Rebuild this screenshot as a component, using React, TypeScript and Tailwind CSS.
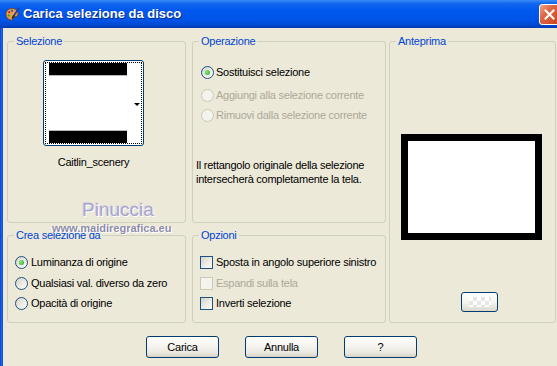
import React from "react";

function Radio({ checked, disabled }: { checked?: boolean; disabled?: boolean }) {
  return (
    <span
      className={
        disabled
          ? "w-[13px] h-[13px] rounded-full border border-[#CAC8BB] bg-[#F4F3EC] flex items-center justify-center shrink-0"
          : "w-[13px] h-[13px] rounded-full border border-[#1C5180] bg-[linear-gradient(135deg,#D6D3C6,#FFFFFF)] flex items-center justify-center shrink-0"
      }
    >
      {checked && (
        <span className="w-[5px] h-[5px] rounded-full bg-[radial-gradient(circle_at_40%_40%,#8CEB86,#1E9E1E)]" />
      )}
    </span>
  );
}

function Check({ disabled }: { disabled?: boolean }) {
  return (
    <span
      className={
        disabled
          ? "w-[13px] h-[13px] border border-[#CAC8BB] bg-[#F4F3EC] shrink-0"
          : "w-[13px] h-[13px] border border-[#1C5180] bg-[linear-gradient(135deg,#D6D3C6,#FFFFFF)] shrink-0"
      }
    />
  );
}

function Group({
  title,
  className,
  children,
}: {
  title: string;
  className: string;
  children?: React.ReactNode;
}) {
  return (
    <fieldset className={"border border-[#D0D0BF] rounded-[3px] min-w-0 p-0 m-0 " + className}>
      <legend className="ml-[6px] px-[2px] leading-[13px] text-[#0046D5]">{title}</legend>
      {children}
    </fieldset>
  );
}

function XPButton({ label }: { label: string }) {
  return (
    <div className="w-[73px] h-[22px] rounded-[3px] border border-[#003C74] bg-[linear-gradient(to_bottom,#FFFFFF_0%,#F5F4EF_45%,#E9E7DE_80%,#D6D0C5_100%)] flex items-center justify-center text-black">
      {label}
    </div>
  );
}

function PaletteIcon() {
  return (
    <svg width="15" height="15" viewBox="0 0 15 15">
      <path
        d="M7 1.5C3.5 1.5 1 4 1 7.2c0 3 2.3 5.6 5.2 5.8 1.2.1 1.6-.8 1.2-1.6-.5-.9.1-1.8 1.2-1.7 1.9.2 4.4-.3 4.4-3C13 3.8 10.5 1.5 7 1.5z"
        fill="#E7A04A"
        stroke="#7A3E10"
        strokeWidth="0.8"
      />
      <circle cx="4.2" cy="5.2" r="1.1" fill="#D62020" />
      <circle cx="7" cy="3.8" r="1.1" fill="#2050E0" />
      <circle cx="3.8" cy="8.6" r="1.1" fill="#20A030" />
      <path d="M13.8 1.2 L8.5 9.2" stroke="#1E3FA0" strokeWidth="1.6" strokeLinecap="round" />
      <path d="M8.6 9 L7.6 10.8" stroke="#3A2A10" strokeWidth="1.6" strokeLinecap="round" />
    </svg>
  );
}

export default function App() {
  return (
    <div className="w-[557px] h-[366px] overflow-hidden flex flex-col font-['Liberation_Sans',Arial,sans-serif] text-[11px] tracking-[-0.25px] text-black bg-[#ECE9D8]">
      {/* Title bar */}
      <div className="h-[28px] shrink-0 flex items-center bg-[linear-gradient(to_bottom,#3A8CF8_0%,#1468EE_12%,#0058EE_35%,#0055E8_70%,#0049D0_90%,#0038B0_100%)]">
        <div className="ml-[5px] w-[15px] h-[15px] flex items-center justify-center">
          <PaletteIcon />
        </div>
        <div className="ml-[3px] text-[13px] font-bold text-white tracking-normal [text-shadow:1px_1px_0_#0B2C8F] leading-[16px]">
          Carica selezione da disco
        </div>
        <div className="flex-1" />
        <div className="w-[21px] h-[21px] shrink-0 mr-[-3px] rounded-[3px] border border-white bg-[linear-gradient(135deg,#F0A58A_0%,#E06A45_35%,#C8401F_100%)] flex items-center justify-center">
          <svg width="11" height="11" viewBox="0 0 11 11">
            <path d="M1.5 1.5 L9.5 9.5 M9.5 1.5 L1.5 9.5" stroke="#FFFFFF" strokeWidth="2" strokeLinecap="square" />
          </svg>
        </div>
      </div>

      {/* Body */}
      <div className="flex flex-1 min-h-0">
        <div className="w-[3px] shrink-0 bg-[linear-gradient(to_right,#0840C8,#1D62E8,#0A4ED8)]" />
        <div className="flex-1 relative pt-[7px] pl-[4px]">
          <div className="flex">
            {/* Left column */}
            <div className="w-[179px] flex flex-col gap-[6px]">
              <Group title="Selezione" className="h-[188px]">
                <div className="ml-[35px] mt-[12px] w-[101px] h-[86px] rounded-[3px] border border-[#003C74] bg-white p-[1px]">
                  <div className="w-full h-full border border-dotted border-black flex">
                    <div className="ml-[3px] w-[78px] h-full flex flex-col justify-between">
                      <div className="h-[13px] bg-black border-b border-[#B8B8B8]" />
                      <div className="h-[13px] bg-black border-t border-[#B8B8B8]" />
                    </div>
                    <div className="flex-1 flex items-center justify-end pr-[1px] pt-[2px]">
                      <div className="w-0 h-0 border-l-[3px] border-r-[3px] border-t-[3px] border-l-transparent border-r-transparent border-t-black" />
                    </div>
                  </div>
                </div>
                <div className="ml-[35px] mt-[10px] w-[101px] text-center leading-[13px]">Caitlin_scenery</div>
              </Group>
              <Group title="Crea selezione da" className="h-[94px]">
                <div className="ml-[7px] mt-[14px] h-[13px] flex items-center gap-[3px]">
                  <Radio checked />
                  <span>Luminanza di origine</span>
                </div>
                <div className="ml-[7px] mt-[8px] h-[13px] flex items-center gap-[3px]">
                  <Radio />
                  <span>Qualsiasi val. diverso da zero</span>
                </div>
                <div className="ml-[7px] mt-[7px] h-[13px] flex items-center gap-[3px]">
                  <Radio />
                  <span>Opacità di origine</span>
                </div>
              </Group>
            </div>

            {/* Middle column */}
            <div className="ml-[6px] w-[194px] flex flex-col gap-[6px]">
              <Group title="Operazione" className="h-[188px]">
                <div className="ml-[8px] mt-[18px] h-[13px] flex items-center gap-[2px]">
                  <Radio checked />
                  <span>Sostituisci selezione</span>
                </div>
                <div className="ml-[8px] mt-[10px] h-[13px] flex items-center gap-[2px] text-[#ACA899]">
                  <Radio disabled />
                  <span>Aggiungi alla selezione corrente</span>
                </div>
                <div className="ml-[8px] mt-[7px] h-[13px] flex items-center gap-[2px] text-[#ACA899]">
                  <Radio disabled />
                  <span>Rimuovi dalla selezione corrente</span>
                </div>
                <div className="ml-[3px] mt-[36px] leading-[14px]">
                  Il rettangolo originale della selezione
                  <br />
                  intersecherà completamente la tela.
                </div>
              </Group>
              <Group title="Opzioni" className="h-[94px]">
                <div className="ml-[7px] mt-[14px] h-[13px] flex items-center gap-[3px]">
                  <Check />
                  <span>Sposta in angolo superiore sinistro</span>
                </div>
                <div className="ml-[7px] mt-[8px] h-[13px] flex items-center gap-[3px] text-[#ACA899]">
                  <Check disabled />
                  <span>Espandi sulla tela</span>
                </div>
                <div className="ml-[7px] mt-[7px] h-[13px] flex items-center gap-[3px]">
                  <Check />
                  <span>Inverti selezione</span>
                </div>
              </Group>
            </div>

            {/* Right column */}
            <div className="ml-[3px] w-[167px]">
              <Group title="Anteprima" className="h-[288px]">
                <div className="ml-[11px] mt-[86px] w-[141px] h-[106px] border-[7px] border-black bg-white" />
                <div className="ml-[71px] mt-[52px] w-[37px] h-[20px] rounded-[3px] border border-[#003C74] bg-[linear-gradient(to_bottom,#FFFFFF_0%,#F5F4EF_50%,#DCD8CC_100%)] flex items-center justify-center">
                  <div className="w-[22px] h-[10px] bg-[image:repeating-conic-gradient(#E6E6E6_0%_25%,#FFFFFF_0%_50%)] bg-[length:8px_8px]" />
                </div>
              </Group>
            </div>
          </div>

          {/* Buttons */}
          <div className="mt-[13px] ml-[139px] flex gap-[26px]">
            <XPButton label="Carica" />
            <XPButton label="Annulla" />
            <XPButton label="?" />
          </div>

          {/* Watermark */}
          <div className="absolute left-[79px] top-[171px] text-[19px] leading-[22px] tracking-[0px] text-[#A8A5CC] [text-shadow:1px_1px_0_#FFFFFF,-1px_-1px_0_#D6D4E4]">
            Pinuccia
          </div>
          <div className="absolute left-[49px] top-[194px] text-[11px] leading-[12px] tracking-[0px] font-bold text-[#8E8BA8] [text-shadow:1px_1px_0_#FFFFFF,-1px_0_0_#FFFFFF]">
            www.maidiregrafica.eu
          </div>
        </div>
      </div>
    </div>
  );
}
